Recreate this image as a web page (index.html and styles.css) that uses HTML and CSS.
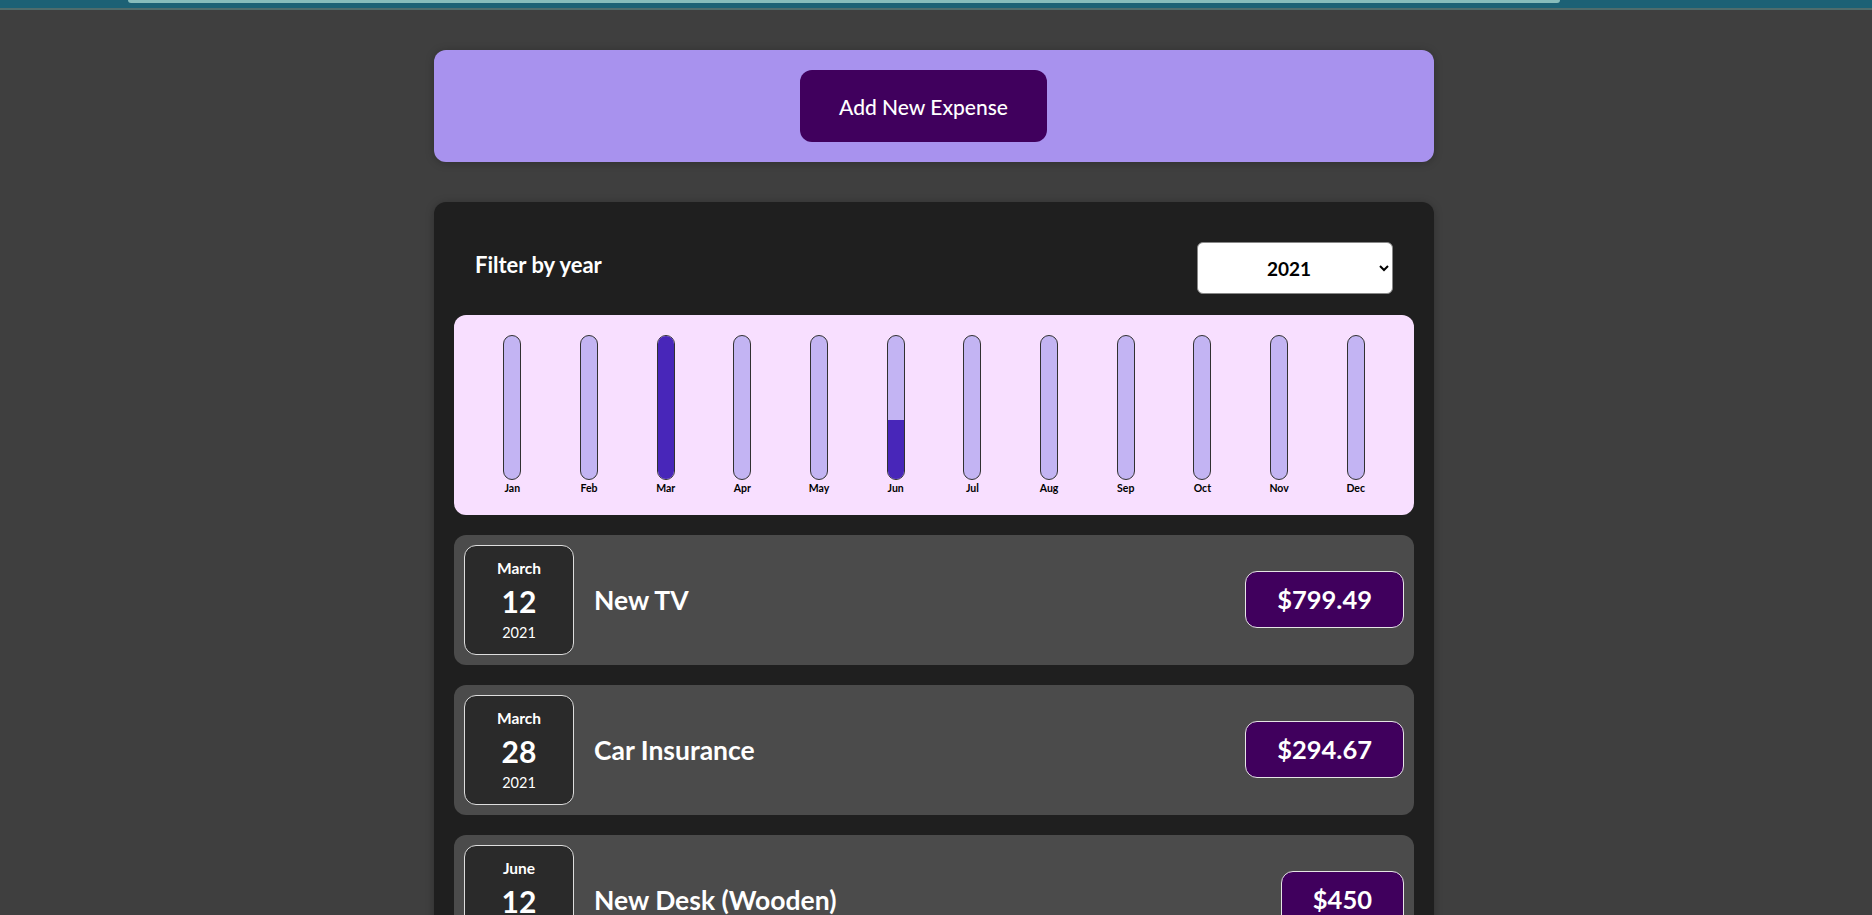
FILE: index.html
```html
<!DOCTYPE html>
<html lang="en">
<head>
<meta charset="utf-8">
<title>Expenses</title>
<link rel="stylesheet" href="styles.css">
</head>
<body>
<div class="topstrip"><div class="topstrip-inner"></div></div>
<main class="app">
  <section class="new-expense">
    <button class="add-btn" type="button">Add New Expense</button>
  </section>

  <section class="expenses">
    <div class="filter">
      <label class="filter-label" for="year">Filter by year</label>
      <select class="filter-select" id="year">
        <option>2022</option>
        <option selected>2021</option>
        <option>2020</option>
        <option>2019</option>
      </select>
    </div>

    <div class="chart">
      <div class="chart-col"><div class="bar"><div class="bar-fill" style="height:0%"></div></div><span class="bar-label">Jan</span></div>
      <div class="chart-col"><div class="bar"><div class="bar-fill" style="height:0%"></div></div><span class="bar-label">Feb</span></div>
      <div class="chart-col"><div class="bar"><div class="bar-fill" style="height:100%"></div></div><span class="bar-label">Mar</span></div>
      <div class="chart-col"><div class="bar"><div class="bar-fill" style="height:0%"></div></div><span class="bar-label">Apr</span></div>
      <div class="chart-col"><div class="bar"><div class="bar-fill" style="height:0%"></div></div><span class="bar-label">May</span></div>
      <div class="chart-col"><div class="bar"><div class="bar-fill" style="height:41.1%"></div></div><span class="bar-label">Jun</span></div>
      <div class="chart-col"><div class="bar"><div class="bar-fill" style="height:0%"></div></div><span class="bar-label">Jul</span></div>
      <div class="chart-col"><div class="bar"><div class="bar-fill" style="height:0%"></div></div><span class="bar-label">Aug</span></div>
      <div class="chart-col"><div class="bar"><div class="bar-fill" style="height:0%"></div></div><span class="bar-label">Sep</span></div>
      <div class="chart-col"><div class="bar"><div class="bar-fill" style="height:0%"></div></div><span class="bar-label">Oct</span></div>
      <div class="chart-col"><div class="bar"><div class="bar-fill" style="height:0%"></div></div><span class="bar-label">Nov</span></div>
      <div class="chart-col"><div class="bar"><div class="bar-fill" style="height:0%"></div></div><span class="bar-label">Dec</span></div>
    </div>

    <ul class="expense-list">
      <li class="expense-item">
        <div class="date">
          <span class="date-month">March</span>
          <span class="date-day">12</span>
          <span class="date-year">2021</span>
        </div>
        <h2 class="expense-title">New TV</h2>
        <div class="expense-price">$799.49</div>
      </li>
      <li class="expense-item">
        <div class="date">
          <span class="date-month">March</span>
          <span class="date-day">28</span>
          <span class="date-year">2021</span>
        </div>
        <h2 class="expense-title">Car Insurance</h2>
        <div class="expense-price">$294.67</div>
      </li>
      <li class="expense-item">
        <div class="date">
          <span class="date-month">June</span>
          <span class="date-day">12</span>
          <span class="date-year">2021</span>
        </div>
        <h2 class="expense-title">New Desk (Wooden)</h2>
        <div class="expense-price">$450</div>
      </li>
    </ul>
  </section>
</main>
</body>
</html>
```

FILE: styles.css
```css
* {
  box-sizing: border-box;
}

html, body {
  margin: 0;
  padding: 0;
}

body {
  background: #3f3f3f;
  font-family: "Lato", "Liberation Sans", sans-serif;
  color: #fff;
}

.topstrip {
  height: 10px;
  background: #1c6175;
  border-bottom: 2px solid #4f6c6c;
  display: flex;
}

.topstrip-inner {
  height: 3px;
  margin-left: 128px;
  width: 1432px;
  background: #87bcbb;
  border-radius: 0 0 4px 4px;
}

.app {
  width: 1000px;
  margin: 40px auto 0;
  position: relative;
  left: -2px;
}

.new-expense {
  background: #a892ee;
  border-radius: 12px;
  padding: 20px;
  display: flex;
  justify-content: center;
  box-shadow: 0 1px 8px rgba(0, 0, 0, 0.25);
}

.add-btn {
  font-family: inherit;
  font-size: 21px;
  font-weight: 500;
  color: #fff;
  background: #40005d;
  border: none;
  border-radius: 12px;
  width: 247px;
  height: 72px;
  margin-right: 21px;
  cursor: pointer;
}

.expenses {
  margin-top: 40px;
  background: #1f1f1f;
  border-radius: 12px;
  padding: 20px;
  box-shadow: 0 1px 8px rgba(0, 0, 0, 0.25);
}

.filter {
  display: flex;
  justify-content: space-between;
  align-items: center;
  padding: 20px 21px 0 21px;
  margin-bottom: 21px;
}

.filter-label {
  font-size: 22px;
  font-weight: 700;
  color: #fff;
  margin-bottom: 8px;
}

.filter-select {
  width: 196px;
  height: 52px;
  font-family: inherit;
  font-size: 19px;
  font-weight: 700;
  text-align: center;
  background: #fff;
  color: #000;
  border: 1px solid #888;
  border-radius: 6px;
  padding: 0 6px;
}

.chart {
  background: #f8dfff;
  border-radius: 12px;
  height: 200px;
  padding: 20px 20px 0;
  display: flex;
}

.chart-col {
  flex: 1;
  display: flex;
  flex-direction: column;
  align-items: center;
}

.bar {
  width: 18px;
  height: 145px;
  border: 1px solid #313131;
  border-radius: 12px;
  background: #c3b4f3;
  overflow: hidden;
  display: flex;
  flex-direction: column;
  justify-content: flex-end;
}

.bar-fill {
  background: #4826b9;
  width: 100%;
}

.bar-label {
  margin-top: 1px;
  font-size: 10.5px;
  font-weight: 700;
  color: #000;
  line-height: 14px;
}

.expense-list {
  list-style: none;
  margin: 20px 0 0;
  padding: 0;
  display: flex;
  flex-direction: column;
  gap: 20px;
}

.expense-item {
  background: #4b4b4b;
  border-radius: 12px;
  padding: 10px;
  height: 130px;
  display: flex;
  align-items: center;
}

.date {
  width: 110px;
  height: 110px;
  flex-shrink: 0;
  background: #2a2a2a;
  border: 1px solid #ddd;
  border-radius: 12px;
  display: flex;
  flex-direction: column;
  align-items: center;
  justify-content: center;
  color: #fff;
}

.date-month {
  font-size: 15.5px;
  font-weight: 700;
  line-height: 20px;
}

.date-day {
  font-size: 30px;
  font-weight: 700;
  line-height: 36px;
  margin-top: 5px;
}

.date-year {
  font-size: 14.5px;
  line-height: 18px;
  margin-top: 5px;
}

.expense-title {
  flex: 1;
  margin: 0 0 0 20px;
  font-size: 26.5px;
  font-weight: 700;
  color: #fff;
}

.expense-price {
  background: #40005d;
  border: 1px solid #e5e5e5;
  border-radius: 12px;
  padding: 12px 31px;
  font-size: 25.5px;
  line-height: 31px;
  font-weight: 700;
  color: #fff;
  margin-bottom: 2px;
}
```
